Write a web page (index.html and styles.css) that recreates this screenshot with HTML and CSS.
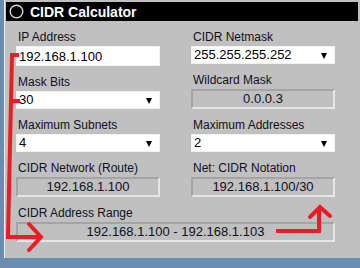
FILE: index.html
```html
<!DOCTYPE html>
<html lang="en">
<head>
  <meta charset="UTF-8">
  <title>CIDR Calculator</title>
  <link rel="stylesheet" href="styles.css">
</head>
<body>
  <div class="panel">
    <div class="title-bar">
      <svg class="title-icon" width="15" height="15" viewBox="0 0 15 15">
        <circle cx="7.5" cy="7.5" r="6.3" fill="none" stroke="#d4d4d4" stroke-width="1.4"/>
      </svg>
      <span>CIDR Calculator</span>
    </div>

    <form class="calc">
      <div class="column">
        <div class="field">
          <label for="ip">IP Address</label>
          <input type="text" id="ip" value="192.168.1.100">
        </div>
        <div class="field">
          <label>Mask Bits</label>
          <div class="select">30</div>
        </div>
        <div class="field">
          <label>Maximum Subnets</label>
          <div class="select">4</div>
        </div>
        <div class="field">
          <label>CIDR Network (Route)</label>
          <div class="readout">192.168.1.100</div>
        </div>
      </div>

      <div class="column">
        <div class="field">
          <label>CIDR Netmask</label>
          <div class="select">255.255.255.252</div>
        </div>
        <div class="field">
          <label>Wildcard Mask</label>
          <div class="readout">0.0.0.3</div>
        </div>
        <div class="field">
          <label>Maximum Addresses</label>
          <div class="select">2</div>
        </div>
        <div class="field">
          <label>Net: CIDR Notation</label>
          <div class="readout">192.168.1.100/30</div>
        </div>
      </div>

      <div class="field wide">
        <label>CIDR Address Range</label>
        <div class="readout">192.168.1.100 - 192.168.1.103</div>
      </div>
    </form>
  </div>

  <!-- hand drawn arrows on top of the form -->
  <svg class="arrows" width="360" height="268" viewBox="0 0 360 268">
    <g fill="none" stroke="#ec1c24" stroke-width="4">
      <path d="M10 55 L19 55"/>
      <path d="M10 101 L20 101"/>
      <path d="M12 55 L8 237 L40 237"/>
      <path d="M29 224 L41 237 L29 250" stroke-linecap="round"/>
      <path d="M276 231 L319 231 L319 209"/>
      <path d="M310 217 L320 207 L330 216" stroke-linecap="round"/>
    </g>
  </svg>
</body>
</html>
```

FILE: styles.css
```css
body {
  margin: 0;
  background-color: #6b8cb1;
  font-family: "Liberation Sans", Arial, sans-serif;
  position: relative;
  width: 360px;
  height: 268px;
  overflow: hidden;
}
.panel {
  margin-left: 4px;
  height: 258px;
  background-color: #c0c0c0;
  border-left: 1px solid #eeeeee;
  box-sizing: border-box;
  padding-top: 2px;
}
.title-bar {
  margin: 0 2px 0 1px;
  height: 19px;
  background-color: #000;
  color: #fff;
  font-weight: bold;
  font-size: 14px;
  display: flex;
  align-items: center;
  gap: 6px;
  padding-left: 3px;
}
.title-icon {
  display: block;
}
.calc {
  display: grid;
  grid-template-columns: 144px 144px;
  column-gap: 31px;
  padding: 9px 0 0 11px;
}
.column {
  display: flex;
  flex-direction: column;
  gap: 9px;
}
.field {
  display: flex;
  flex-direction: column;
}
.field label {
  font-size: 12px;
  line-height: 14px;
  color: #101020;
  padding-left: 2px;
  margin-bottom: 2px;
}
.wide {
  grid-column: 1 / 3;
  margin-top: 9px;
}
.field input,
.select {
  box-sizing: border-box;
  font-family: inherit;
  font-size: 13px;
  color: #000;
  background: #fff;
  border: 1px solid #f2f2f2;
  margin: 0;
  padding: 0 2px;
}
.field input {
  height: 20px;
  outline: none;
}
.select {
  height: 18px;
  line-height: 16px;
  position: relative;
}
.select::after {
  content: "";
  position: absolute;
  right: 7px;
  top: 6px;
  border-left: 3.5px solid transparent;
  border-right: 3.5px solid transparent;
  border-top: 6px solid #000;
}
.readout {
  box-sizing: border-box;
  height: 20px;
  line-height: 16px;
  font-size: 13px;
  text-align: center;
  color: #101020;
  border: 2px solid;
  border-color: #a4a4a4 #e6e6e6 #e6e6e6 #a4a4a4;
}
.arrows {
  position: absolute;
  top: 0;
  left: 0;
}
```
